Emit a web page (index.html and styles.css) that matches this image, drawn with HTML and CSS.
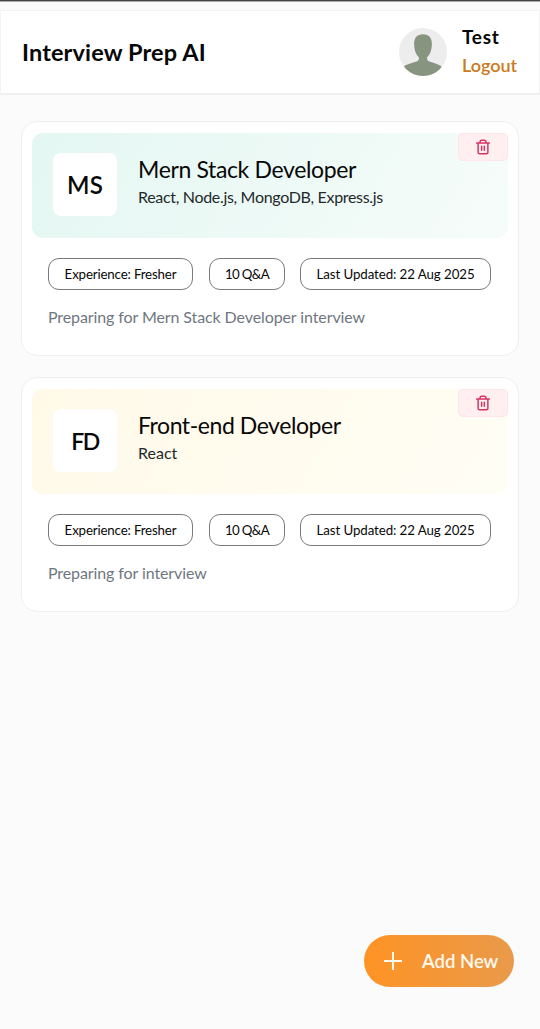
FILE: index.html
```html
<!DOCTYPE html>
<html lang="en">
<head>
<meta charset="utf-8">
<title>Interview Prep AI</title>
<link rel="stylesheet" href="styles.css">
</head>
<body>
<svg class="sprite" aria-hidden="true">
  <symbol id="trash" viewBox="0 0 24 24">
    <path d="M2.500 6h19M4.700 6v14.200a1.800 1.800 0 0 0 1.800 1.800h11a1.800 1.800 0 0 0 1.800-1.800V6M7.500 6V4.400A2.400 2.400 0 0 1 9.900 2h4.200a2.400 2.400 0 0 1 2.400 2.400V6M10 11v6M14 11v6"/>
  </symbol>
</svg>
<header class="navbar">
  <div class="brand"><span>Interview Prep AI</span></div>
  <div class="profile">
    <svg class="avatar" viewBox="0 0 48 48">
      <defs><clipPath id="round"><circle cx="24" cy="24" r="24"/></clipPath></defs>
      <g clip-path="url(#round)">
        <path fill="#ededed" d="M0 0h48v48H0z"/>
        <path fill="#87947f" d="M24 6.200c6 0 9 3.600 8.900 9.800-.1 6-1.600 10.500-4.700 13.200-.5 2.300.3 3.600 2.300 4.400 5.700 1.700 9.500 2.900 12.500 5.400V48H4v-9c3-2.500 7.800-3.700 13.500-5.400 2-.8 2.800-2.100 2.300-4.400-3.100-2.700-4.600-7.200-4.700-13.200C15 9.800 18 6.200 24 6.200z"/>
      </g>
    </svg>
    <div class="account">
      <div class="user"><span>Test</span></div>
      <div class="logout"><span>Logout</span></div>
    </div>
  </div>
</header>
<main class="sessions">
  <article class="card">
    <div class="banner mint">
      <div class="initials">MS</div>
      <div class="heading">
        <h2><span>Mern Stack Developer</span></h2>
        <p class="stack"><span>React, Node.js, MongoDB, Express.js</span></p>
      </div>
      <button class="delete"><svg><use href="#trash"/></svg></button>
    </div>
    <div class="pills">
      <div class="pill exp"><span>Experience: Fresher</span></div>
      <div class="pill count"><span>10 Q&amp;A</span></div>
      <div class="pill date"><span>Last Updated: 22 Aug 2025</span></div>
    </div>
    <p class="description"><span>Preparing for Mern Stack Developer interview</span></p>
  </article>
  <article class="card">
    <div class="banner cream">
      <div class="initials fd">FD</div>
      <div class="heading">
        <h2 class="frontend"><span>Front-end Developer</span></h2>
        <p><span>React</span></p>
      </div>
      <button class="delete"><svg><use href="#trash"/></svg></button>
    </div>
    <div class="pills">
      <div class="pill exp"><span>Experience: Fresher</span></div>
      <div class="pill count"><span>10 Q&amp;A</span></div>
      <div class="pill date"><span>Last Updated: 22 Aug 2025</span></div>
    </div>
    <p class="description"><span>Preparing for interview</span></p>
  </article>
</main>
<button class="add"><svg viewBox="0 0 18 18"><path d="M9 0v18M0 9h18"/></svg><span>Add New</span></button>
</body>
</html>
```
FILE: styles.css
```css
* { box-sizing: border-box; }
body {
  margin: 0;
  height: 1029px;
  overflow: hidden;
  background: #fbfbfb;
  border-top: 1px solid #454246;
  box-shadow: inset 0 1px #a9a8aa;
  color: #080808;
  font-family: Lato, "Open Sans", sans-serif;
  display: flex;
  flex-direction: column;
}
h2, p { margin: 0; font-weight: 400; white-space: nowrap; }
button { border: 0; padding: 0; font-family: inherit; }
.sprite { display: none; }
.navbar {
  height: 85px;
  margin-top: 9px;
  padding: 0 21px;
  flex: none;
  display: flex;
  align-items: center;
  justify-content: space-between;
  background: #fff;
  border: 1px solid #f3f3f3;
  border-bottom: 2px solid #efefef;
}
.brand { font-size: 23.500px; font-weight: 700; letter-spacing: 0.13px; white-space: nowrap; }
.profile { display: flex; align-items: center; }
.avatar { width: 48px; height: 48px; margin-right: 15px; }
.account { width: 56px; padding-bottom: 3px; white-space: nowrap; }
.user { font-size: 19px; font-weight: 700; line-height: 29px; letter-spacing: 0.7px; }
.logout { font-size: 18px; font-weight: 600; line-height: 29px; color: #cb7a1c; }
.sessions {
  padding: 26px 21px 0;
  display: flex;
  flex-direction: column;
  gap: 21px;
}
.card {
  height: 235px;
  padding: 11px 10px;
  border: 1px solid #efefef;
  border-radius: 16px;
  background: #fff;
}
.banner {
  position: relative;
  height: 105px;
  padding: 20px 21px;
  border-radius: 11px;
  display: flex;
  gap: 21px;
}
.mint { background: linear-gradient(120deg, #e4f7f2, #f6fcfa); }
.cream { background: linear-gradient(120deg, #fff9e8, #fffef5); }
.initials {
  width: 64px;
  height: 63px;
  flex: none;
  display: grid;
  place-items: center;
  border-radius: 8px;
  background: #fff;
  font-size: 24px;
  font-weight: 600;
  letter-spacing: 0.3px;
}
.fd { font-size: 23px; letter-spacing: -1.500px; }
.heading h2 { font-size: 23px; line-height: 32px; letter-spacing: -0.36px; }
.heading .frontend { letter-spacing: -0.44px; }
.heading p { font-size: 16px; line-height: 24px; color: #24292b; }
.heading .stack { letter-spacing: -0.32px; }
.delete {
  position: absolute;
  top: 0;
  right: 0;
  width: 50px;
  height: 28px;
  display: grid;
  place-items: center;
  border: 1px solid #fde5e9;
  border-radius: 5px;
  background: #ffeff1;
}
.delete svg { width: 16px; height: 16px; fill: none; stroke: #d33562; stroke-width: 2.2; stroke-linecap: round; stroke-linejoin: round; }
.pills { display: flex; margin: 20px 0 0 16px; }
.pill {
  height: 32px;
  padding-bottom: 1px;
  flex: none;
  display: grid;
  place-items: center;
  border: 1px solid #7b7b7b;
  border-radius: 11px;
  font-size: 13.300px;
  white-space: nowrap;
}
.exp { width: 145px; margin-right: 16px; letter-spacing: -0.16px; }
.count { width: 76px; margin-right: 15px; letter-spacing: -0.700px; }
.date { width: 191px; letter-spacing: -0.08px; }
.description { margin: 15px 0 0 16px; font-size: 16px; line-height: 24px; letter-spacing: -0.1px; color: #707780; }
.add {
  position: fixed;
  left: 364px;
  top: 935px;
  width: 150px;
  height: 52px;
  padding: 0 0 1px 20px;
  display: flex;
  align-items: center;
  gap: 20px;
  border-radius: 26px;
  background: linear-gradient(90deg, #ff9324, #e99a4b);
  color: #fffaf0;
  font-size: 18.500px;
  font-weight: 600;
  white-space: nowrap;
}
.add svg { width: 18px; height: 18px; flex: none; stroke: #fffaf0; stroke-width: 2; }
```
